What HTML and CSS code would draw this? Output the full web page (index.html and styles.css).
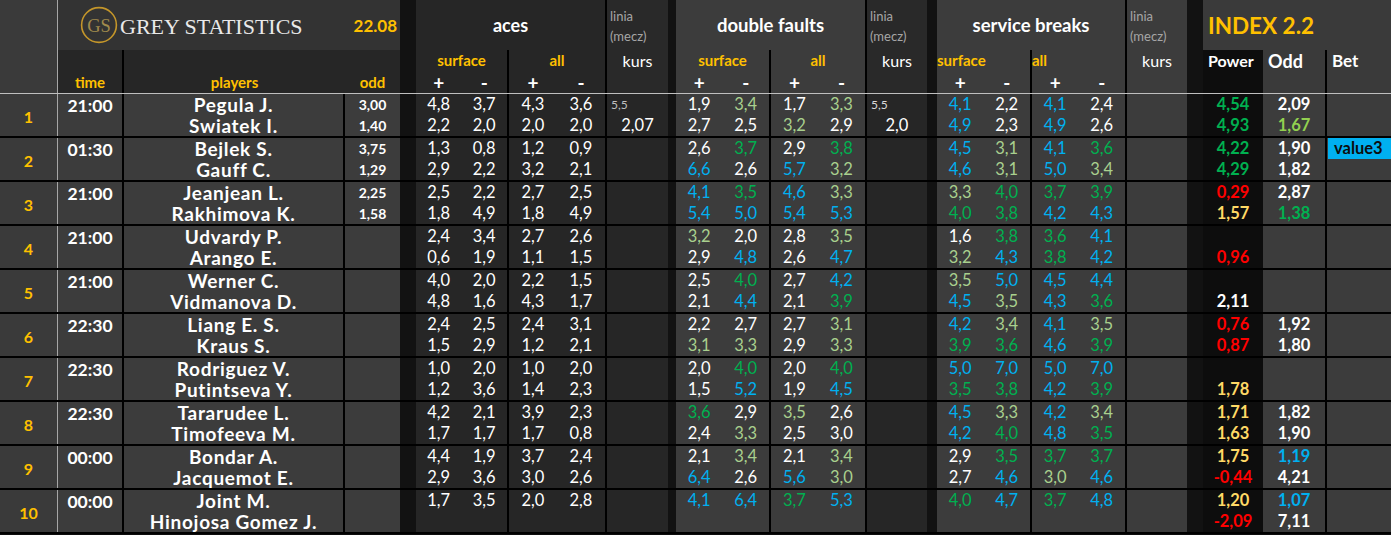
FILE: index.html
```html
<!DOCTYPE html>
<html lang="pl">
<head>
<meta charset="utf-8">
<title>Grey Statistics</title>
<link rel="stylesheet" href="styles.css">
</head>
<body>
<div class="sheet">
  <header class="hdr">
    <div class="h-num"></div>
    <div class="h-title">
      <svg class="logo" width="38" height="38" viewBox="0 0 38 38"><circle cx="19" cy="19" r="17.4" fill="none" stroke="#c4962a" stroke-width="1.6"/><text x="19" y="25.5" text-anchor="middle" font-family="Liberation Serif, serif" font-size="18.5" fill="#a08a4c">GS</text></svg>
      <span class="brand">GREY STATISTICS</span>
      <span class="date">22.08</span>
    </div>
    <div class="h-time"><div class="l2">time</div></div>
    <div class="h-players"><div class="l2">players</div></div>
    <div class="h-odd"><div class="l2">odd</div></div>
    <div class="h-sep s5"></div>
    <div class="h-grp dk a-t">aces</div>
    <div class="h-sub dk br a-s"><div class="hl ye">surface</div><div class="hl pm"><span>+</span><span>-</span></div></div>
    <div class="h-sub dk br a-a"><div class="hl ye">all</div><div class="hl pm"><span>+</span><span>-</span></div></div>
    <div class="h-lin dk2 k1-t"><span>linia</span><span>(mecz)</span></div>
    <div class="h-kurs dk2 k1-k">kurs</div>
    <div class="h-sep s9"></div>
    <div class="h-grp lt d-t">double faults</div>
    <div class="h-sub lt br d-s"><div class="hl ye">surface</div><div class="hl pm"><span>+</span><span>-</span></div></div>
    <div class="h-sub lt br d-a"><div class="hl ye">all</div><div class="hl pm"><span>+</span><span>-</span></div></div>
    <div class="h-lin dk2 k2-t"><span>linia</span><span>(mecz)</span></div>
    <div class="h-kurs dk2 k2-k">kurs</div>
    <div class="h-sep s13"></div>
    <div class="h-grp lt s-t">service breaks</div>
    <div class="h-sub lt br s-s"><div class="hl ye left">surface</div><div class="hl pm"><span>+</span><span>-</span></div></div>
    <div class="h-sub lt br s-a"><div class="hl ye left">all</div><div class="hl pm"><span>+</span><span>-</span></div></div>
    <div class="h-lin lt k3-t"><span>linia</span><span>(mecz)</span></div>
    <div class="h-kurs lt k3-k">kurs</div>
    <div class="h-sep s17"></div>
    <div class="h-index">INDEX 2.2</div>
    <div class="h-power">Power</div>
    <div class="h-oddx">Odd</div>
    <div class="h-bet">Bet</div>
  </header>

  <div class="row">
    <div class="n">1</div>
    <div class="t"><div class="l">21:00</div></div>
    <div class="pl"><div class="l">Pegula J.</div><div class="l">Swiatek I.</div></div>
    <div class="od"><div class="l">3,00</div><div class="l">1,40</div></div>
    <div class="sp"></div>
    <div class="g dk br"><div class="l"><span>4,8</span><span>3,7</span></div><div class="l"><span>2,2</span><span>2,0</span></div></div>
    <div class="g dk br"><div class="l"><span>4,3</span><span>3,6</span></div><div class="l"><span>2,0</span><span>2,0</span></div></div>
    <div class="k dk"><div class="l ln">5,5</div><div class="l">2,07</div></div>
    <div class="sp"></div>
    <div class="g lt br"><div class="l"><span>1,9</span><span class="lg">3,4</span></div><div class="l"><span>2,7</span><span>2,5</span></div></div>
    <div class="g lt br"><div class="l"><span>1,7</span><span class="lg">3,3</span></div><div class="l"><span class="lg">3,2</span><span>2,9</span></div></div>
    <div class="k dk"><div class="l ln ln2">5,5</div><div class="l">2,0</div></div>
    <div class="sp"></div>
    <div class="g lt br"><div class="l"><span class="bl">4,1</span><span>2,2</span></div><div class="l"><span class="bl">4,9</span><span>2,3</span></div></div>
    <div class="g lt br"><div class="l"><span class="bl">4,1</span><span>2,4</span></div><div class="l"><span class="bl">4,9</span><span>2,6</span></div></div>
    <div class="k lt"></div>
    <div class="sp"></div>
    <div class="pw"><div class="l gn">4,54</div><div class="l gn">4,93</div></div>
    <div class="ox"><div class="l">2,09</div><div class="l bg2">1,67</div></div>
    <div class="bet"></div>
  </div>

  <div class="row">
    <div class="n">2</div>
    <div class="t"><div class="l">01:30</div></div>
    <div class="pl"><div class="l">Bejlek S.</div><div class="l">Gauff C.</div></div>
    <div class="od"><div class="l">3,75</div><div class="l">1,29</div></div>
    <div class="sp"></div>
    <div class="g dk br"><div class="l"><span>1,3</span><span>0,8</span></div><div class="l"><span>2,9</span><span>2,2</span></div></div>
    <div class="g dk br"><div class="l"><span>1,2</span><span>0,9</span></div><div class="l"><span>3,2</span><span>2,1</span></div></div>
    <div class="k dk"></div>
    <div class="sp"></div>
    <div class="g lt br"><div class="l"><span>2,6</span><span class="gn">3,7</span></div><div class="l"><span class="bl">6,6</span><span>2,6</span></div></div>
    <div class="g lt br"><div class="l"><span>2,9</span><span class="gn">3,8</span></div><div class="l"><span class="bl">5,7</span><span class="lg">3,2</span></div></div>
    <div class="k dk"></div>
    <div class="sp"></div>
    <div class="g lt br"><div class="l"><span class="bl">4,5</span><span class="lg">3,1</span></div><div class="l"><span class="bl">4,6</span><span class="lg">3,1</span></div></div>
    <div class="g lt br"><div class="l"><span class="bl">4,1</span><span class="gn">3,6</span></div><div class="l"><span class="bl">5,0</span><span class="lg">3,4</span></div></div>
    <div class="k lt"></div>
    <div class="sp"></div>
    <div class="pw"><div class="l gn">4,22</div><div class="l gn">4,29</div></div>
    <div class="ox"><div class="l">1,90</div><div class="l">1,82</div></div>
    <div class="bet"><div class="l tag">value3</div></div>
  </div>

  <div class="row">
    <div class="n">3</div>
    <div class="t"><div class="l">21:00</div></div>
    <div class="pl"><div class="l">Jeanjean L.</div><div class="l">Rakhimova K.</div></div>
    <div class="od"><div class="l">2,25</div><div class="l">1,58</div></div>
    <div class="sp"></div>
    <div class="g dk br"><div class="l"><span>2,5</span><span>2,2</span></div><div class="l"><span>1,8</span><span>4,9</span></div></div>
    <div class="g dk br"><div class="l"><span>2,7</span><span>2,5</span></div><div class="l"><span>1,8</span><span>4,9</span></div></div>
    <div class="k dk"></div>
    <div class="sp"></div>
    <div class="g lt br"><div class="l"><span class="bl">4,1</span><span class="gn">3,5</span></div><div class="l"><span class="bl">5,4</span><span class="bl">5,0</span></div></div>
    <div class="g lt br"><div class="l"><span class="bl">4,6</span><span class="lg">3,3</span></div><div class="l"><span class="bl">5,4</span><span class="bl">5,3</span></div></div>
    <div class="k dk"></div>
    <div class="sp"></div>
    <div class="g lt br"><div class="l"><span class="lg">3,3</span><span class="gn">4,0</span></div><div class="l"><span class="gn">4,0</span><span class="gn">3,8</span></div></div>
    <div class="g lt br"><div class="l"><span class="gn">3,7</span><span class="gn">3,9</span></div><div class="l"><span class="bl">4,2</span><span class="bl">4,3</span></div></div>
    <div class="k lt"></div>
    <div class="sp"></div>
    <div class="pw"><div class="l rd">0,29</div><div class="l yl">1,57</div></div>
    <div class="ox"><div class="l">2,87</div><div class="l gn">1,38</div></div>
    <div class="bet"></div>
  </div>

  <div class="row">
    <div class="n">4</div>
    <div class="t"><div class="l">21:00</div></div>
    <div class="pl"><div class="l">Udvardy P.</div><div class="l">Arango E.</div></div>
    <div class="od"></div>
    <div class="sp"></div>
    <div class="g dk br"><div class="l"><span>2,4</span><span>3,4</span></div><div class="l"><span>0,6</span><span>1,9</span></div></div>
    <div class="g dk br"><div class="l"><span>2,7</span><span>2,6</span></div><div class="l"><span>1,1</span><span>1,5</span></div></div>
    <div class="k dk"></div>
    <div class="sp"></div>
    <div class="g lt br"><div class="l"><span class="lg">3,2</span><span>2,0</span></div><div class="l"><span>2,9</span><span class="bl">4,8</span></div></div>
    <div class="g lt br"><div class="l"><span>2,8</span><span class="lg">3,5</span></div><div class="l"><span>2,6</span><span class="bl">4,7</span></div></div>
    <div class="k dk"></div>
    <div class="sp"></div>
    <div class="g lt br"><div class="l"><span>1,6</span><span class="gn">3,8</span></div><div class="l"><span class="lg">3,2</span><span class="bl">4,3</span></div></div>
    <div class="g lt br"><div class="l"><span class="gn">3,6</span><span class="bl">4,1</span></div><div class="l"><span class="gn">3,8</span><span class="bl">4,2</span></div></div>
    <div class="k lt"></div>
    <div class="sp"></div>
    <div class="pw"><div class="l"></div><div class="l rd">0,96</div></div>
    <div class="ox"></div>
    <div class="bet"></div>
  </div>

  <div class="row">
    <div class="n">5</div>
    <div class="t"><div class="l">21:00</div></div>
    <div class="pl"><div class="l">Werner C.</div><div class="l">Vidmanova D.</div></div>
    <div class="od"></div>
    <div class="sp"></div>
    <div class="g dk br"><div class="l"><span>4,0</span><span>2,0</span></div><div class="l"><span>4,8</span><span>1,6</span></div></div>
    <div class="g dk br"><div class="l"><span>2,2</span><span>1,5</span></div><div class="l"><span>4,3</span><span>1,7</span></div></div>
    <div class="k dk"></div>
    <div class="sp"></div>
    <div class="g lt br"><div class="l"><span>2,5</span><span class="gn">4,0</span></div><div class="l"><span>2,1</span><span class="bl">4,4</span></div></div>
    <div class="g lt br"><div class="l"><span>2,7</span><span class="bl">4,2</span></div><div class="l"><span>2,1</span><span class="gn">3,9</span></div></div>
    <div class="k dk"></div>
    <div class="sp"></div>
    <div class="g lt br"><div class="l"><span class="lg">3,5</span><span class="bl">5,0</span></div><div class="l"><span class="bl">4,5</span><span class="lg">3,5</span></div></div>
    <div class="g lt br"><div class="l"><span class="bl">4,5</span><span class="bl">4,4</span></div><div class="l"><span class="bl">4,3</span><span class="gn">3,6</span></div></div>
    <div class="k lt"></div>
    <div class="sp"></div>
    <div class="pw"><div class="l"></div><div class="l">2,11</div></div>
    <div class="ox"></div>
    <div class="bet"></div>
  </div>

  <div class="row">
    <div class="n">6</div>
    <div class="t"><div class="l">22:30</div></div>
    <div class="pl"><div class="l">Liang E. S.</div><div class="l">Kraus S.</div></div>
    <div class="od"></div>
    <div class="sp"></div>
    <div class="g dk br"><div class="l"><span>2,4</span><span>2,5</span></div><div class="l"><span>1,5</span><span>2,9</span></div></div>
    <div class="g dk br"><div class="l"><span>2,4</span><span>3,1</span></div><div class="l"><span>1,2</span><span>2,1</span></div></div>
    <div class="k dk"></div>
    <div class="sp"></div>
    <div class="g lt br"><div class="l"><span>2,2</span><span>2,7</span></div><div class="l"><span class="lg">3,1</span><span class="lg">3,3</span></div></div>
    <div class="g lt br"><div class="l"><span>2,7</span><span class="lg">3,1</span></div><div class="l"><span>2,9</span><span class="lg">3,3</span></div></div>
    <div class="k dk"></div>
    <div class="sp"></div>
    <div class="g lt br"><div class="l"><span class="bl">4,2</span><span class="lg">3,4</span></div><div class="l"><span class="gn">3,9</span><span class="gn">3,6</span></div></div>
    <div class="g lt br"><div class="l"><span class="bl">4,1</span><span class="lg">3,5</span></div><div class="l"><span class="bl">4,6</span><span class="gn">3,9</span></div></div>
    <div class="k lt"></div>
    <div class="sp"></div>
    <div class="pw"><div class="l rd">0,76</div><div class="l rd">0,87</div></div>
    <div class="ox"><div class="l">1,92</div><div class="l">1,80</div></div>
    <div class="bet"></div>
  </div>

  <div class="row">
    <div class="n">7</div>
    <div class="t"><div class="l">22:30</div></div>
    <div class="pl"><div class="l">Rodriguez V.</div><div class="l">Putintseva Y.</div></div>
    <div class="od"></div>
    <div class="sp"></div>
    <div class="g dk br"><div class="l"><span>1,0</span><span>2,0</span></div><div class="l"><span>1,2</span><span>3,6</span></div></div>
    <div class="g dk br"><div class="l"><span>1,0</span><span>2,0</span></div><div class="l"><span>1,4</span><span>2,3</span></div></div>
    <div class="k dk"></div>
    <div class="sp"></div>
    <div class="g lt br"><div class="l"><span>2,0</span><span class="gn">4,0</span></div><div class="l"><span>1,5</span><span class="bl">5,2</span></div></div>
    <div class="g lt br"><div class="l"><span>2,0</span><span class="gn">4,0</span></div><div class="l"><span>1,9</span><span class="bl">4,5</span></div></div>
    <div class="k dk"></div>
    <div class="sp"></div>
    <div class="g lt br"><div class="l"><span class="bl">5,0</span><span class="bl">7,0</span></div><div class="l"><span class="gn">3,5</span><span class="gn">3,8</span></div></div>
    <div class="g lt br"><div class="l"><span class="bl">5,0</span><span class="bl">7,0</span></div><div class="l"><span class="bl">4,2</span><span class="gn">3,9</span></div></div>
    <div class="k lt"></div>
    <div class="sp"></div>
    <div class="pw"><div class="l"></div><div class="l yl">1,78</div></div>
    <div class="ox"></div>
    <div class="bet"></div>
  </div>

  <div class="row">
    <div class="n">8</div>
    <div class="t"><div class="l">22:30</div></div>
    <div class="pl"><div class="l">Tararudee L.</div><div class="l">Timofeeva M.</div></div>
    <div class="od"></div>
    <div class="sp"></div>
    <div class="g dk br"><div class="l"><span>4,2</span><span>2,1</span></div><div class="l"><span>1,7</span><span>1,7</span></div></div>
    <div class="g dk br"><div class="l"><span>3,9</span><span>2,3</span></div><div class="l"><span>1,7</span><span>0,8</span></div></div>
    <div class="k dk"></div>
    <div class="sp"></div>
    <div class="g lt br"><div class="l"><span class="gn">3,6</span><span>2,9</span></div><div class="l"><span>2,4</span><span class="lg">3,3</span></div></div>
    <div class="g lt br"><div class="l"><span class="lg">3,5</span><span>2,6</span></div><div class="l"><span>2,5</span><span>3,0</span></div></div>
    <div class="k dk"></div>
    <div class="sp"></div>
    <div class="g lt br"><div class="l"><span class="bl">4,5</span><span class="lg">3,3</span></div><div class="l"><span class="bl">4,2</span><span class="gn">4,0</span></div></div>
    <div class="g lt br"><div class="l"><span class="bl">4,2</span><span class="lg">3,4</span></div><div class="l"><span class="bl">4,8</span><span class="gn">3,5</span></div></div>
    <div class="k lt"></div>
    <div class="sp"></div>
    <div class="pw"><div class="l yl">1,71</div><div class="l yl">1,63</div></div>
    <div class="ox"><div class="l">1,82</div><div class="l">1,90</div></div>
    <div class="bet"></div>
  </div>

  <div class="row">
    <div class="n">9</div>
    <div class="t"><div class="l">00:00</div></div>
    <div class="pl"><div class="l">Bondar A.</div><div class="l">Jacquemot E.</div></div>
    <div class="od"></div>
    <div class="sp"></div>
    <div class="g dk br"><div class="l"><span>4,4</span><span>1,9</span></div><div class="l"><span>2,9</span><span>3,6</span></div></div>
    <div class="g dk br"><div class="l"><span>3,7</span><span>2,4</span></div><div class="l"><span>3,0</span><span>2,6</span></div></div>
    <div class="k dk"></div>
    <div class="sp"></div>
    <div class="g lt br"><div class="l"><span>2,1</span><span class="lg">3,4</span></div><div class="l"><span class="bl">6,4</span><span>2,6</span></div></div>
    <div class="g lt br"><div class="l"><span>2,1</span><span class="lg">3,4</span></div><div class="l"><span class="bl">5,6</span><span class="lg">3,0</span></div></div>
    <div class="k dk"></div>
    <div class="sp"></div>
    <div class="g lt br"><div class="l"><span>2,9</span><span class="gn">3,5</span></div><div class="l"><span>2,7</span><span class="bl">4,6</span></div></div>
    <div class="g lt br"><div class="l"><span class="gn">3,7</span><span class="gn">3,7</span></div><div class="l"><span class="lg">3,0</span><span class="bl">4,6</span></div></div>
    <div class="k lt"></div>
    <div class="sp"></div>
    <div class="pw"><div class="l yl">1,75</div><div class="l rd">-0,44</div></div>
    <div class="ox"><div class="l bl">1,19</div><div class="l">4,21</div></div>
    <div class="bet"></div>
  </div>

  <div class="row">
    <div class="n">10</div>
    <div class="t"><div class="l">00:00</div></div>
    <div class="pl"><div class="l">Joint M.</div><div class="l">Hinojosa Gomez J.</div></div>
    <div class="od"></div>
    <div class="sp"></div>
    <div class="g dk br"><div class="l"><span>1,7</span><span>3,5</span></div><div class="l"></div></div>
    <div class="g dk br"><div class="l"><span>2,0</span><span>2,8</span></div><div class="l"></div></div>
    <div class="k dk"></div>
    <div class="sp"></div>
    <div class="g lt br"><div class="l"><span class="bl">4,1</span><span class="bl">6,4</span></div><div class="l"></div></div>
    <div class="g lt br"><div class="l"><span class="gn">3,7</span><span class="bl">5,3</span></div><div class="l"></div></div>
    <div class="k dk"></div>
    <div class="sp"></div>
    <div class="g lt br"><div class="l"><span class="gn">4,0</span><span class="bl">4,7</span></div><div class="l"></div></div>
    <div class="g lt br"><div class="l"><span class="gn">3,7</span><span class="bl">4,8</span></div><div class="l"></div></div>
    <div class="k lt"></div>
    <div class="sp"></div>
    <div class="pw"><div class="l yl">1,20</div><div class="l rd">-2,09</div></div>
    <div class="ox"><div class="l bl">1,07</div><div class="l">7,11</div></div>
    <div class="bet"></div>
  </div>
</div>
</body>
</html>
```

FILE: styles.css
```css
* { box-sizing: border-box; margin: 0; padding: 0; }

body {
  margin: 0;
  background: #0d0d0d;
  color: #ffffff;
  font-family: Lato, "Open Sans", "DejaVu Sans", sans-serif;
  width: 1391px;
  height: 535px;
  overflow: hidden;
}

.sheet { width: 1391px; }

.hdr, .row {
  display: grid;
  grid-template-columns: 58px 66px 221px 55px 16px 93px 98px 61px 8px 95px 96px 60px 10px 95px 95px 60px 16px 60px 64px 64px;
}

/* ---------- header ---------- */
.hdr {
  grid-template-rows: 50px 43px;
  height: 94px;
  border-bottom: 1px solid #bfbfbf;
}

.h-num { grid-column: 1; grid-row: 1 / 3; background: #3a3a3a; border-right: 1px solid #a6a6a6; }

.h-title {
  grid-column: 2 / 5; grid-row: 1;
  background: #333333;
  display: flex; align-items: center;
  padding-left: 22px; padding-right: 3px;
}
.logo { display: block; flex: none; }
.brand {
  margin-left: 2px;
  font-family: "Liberation Serif", "Times New Roman", serif;
  font-size: 22px;
  color: #e9e9e9;
  line-height: 1;
  padding-top: 3px;
}
.date {
  margin-left: auto;
  font-weight: 700;
  font-size: 17px;
  color: #ffc000;
}

.h-time, .h-players, .h-odd {
  grid-row: 2; background: #262626;
  display: flex; flex-direction: column; justify-content: flex-end;
  color: #ffc000; font-weight: 700; font-size: 15px; text-align: center;
}
.h-time { grid-column: 2; border-right: 2px solid #000; }
.h-players { grid-column: 3; }
.h-odd { grid-column: 4; }
.l2 { height: 21px; line-height: 21px; }

.h-sep { grid-row: 1 / 3; background: #121212; }
.s5 { grid-column: 5; }
.s9 { grid-column: 9; }
.s13 { grid-column: 13; }
.s17 { grid-column: 17; }

.h-grp {
  grid-row: 1;
  display: flex; align-items: center; justify-content: center;
  font-weight: 700; font-size: 18px;
  border-right: 2px solid #000;
}
.a-t { grid-column: 6 / 8; }
.d-t { grid-column: 10 / 12; font-size: 18.5px; }
.s-t { grid-column: 14 / 16; font-size: 18.5px; }

.h-sub { grid-row: 2; display: flex; flex-direction: column; }
.a-s { grid-column: 6; }
.a-a { grid-column: 7; }
.d-s { grid-column: 10; }
.d-a { grid-column: 11; }
.s-s { grid-column: 14; }
.s-a { grid-column: 15; }

.hl { height: 21.5px; line-height: 21.5px; text-align: center; font-weight: 700; }
.ye { color: #ffc000; font-size: 15px; }
.left { text-align: left; }
.pm { display: flex; font-size: 19px; }
.pm span { flex: 1; text-align: center; }

.h-lin {
  grid-row: 1;
  display: flex; flex-direction: column; justify-content: center;
  padding-left: 3px; padding-top: 2px;
  color: #a6a6a6; font-size: 13px; line-height: 20px;
}
.h-kurs {
  grid-row: 2;
  font-size: 16px; text-align: center;
  height: 43px; line-height: 22px;
}
.k1-t, .k1-k { grid-column: 8; }
.k2-t, .k2-k { grid-column: 12; }
.k3-t, .k3-k { grid-column: 16; }

.h-index {
  grid-column: 18 / 21; grid-row: 1;
  background: #3a3a3a;
  color: #ffc000; font-weight: 700; font-size: 22.5px;
  display: flex; align-items: center; padding-left: 5px;
}
.h-power, .h-oddx, .h-bet {
  grid-row: 2; font-weight: 700; line-height: 22px; padding-left: 5px;
}
.h-power { grid-column: 18; background: #0d0d0d; font-size: 16px; }
.h-oddx { grid-column: 19; background: #3a3a3a; font-size: 18px; border-right: 2px solid #000; }
.h-bet { grid-column: 20; background: #3a3a3a; font-size: 17px; }

/* ---------- data rows ---------- */
.row { height: 44px; border-bottom: 2px solid #000; }
.row > div { display: flex; flex-direction: column; }

.l { height: 21px; line-height: 21px; display: flex; justify-content: center; white-space: nowrap; }
.l span { flex: 1; text-align: center; }

.dk { background: #262626; }
.dk2 { background: #292929; }
.lt { background: #3c3c3c; }
.br { border-right: 2px solid #000; }

.n {
  background: #3a3a3a; border-right: 1px solid #a6a6a6;
  justify-content: center; align-items: center;
  color: #ffc000; font-weight: 700; font-size: 16px; padding-top: 2px;
}
.t { background: #3c3c3c; border-right: 2px solid #000; font-weight: 700; font-size: 17.5px; padding-top: 1px; }
.pl { background: #3c3c3c; border-right: 2px solid #000; font-weight: 700; font-size: 19px; letter-spacing: 0.7px; }
.od { background: #3c3c3c; font-weight: 700; font-size: 14px; }
.sp { background: #121212; }

.g { font-size: 16.5px; }
.k { font-size: 16.5px; }
.ln { justify-content: flex-start; padding-left: 4px; font-size: 12px; color: #bfbfbf; }
.ln2 { color: #d9d9d9; }

.pw { background: #0d0d0d; font-weight: 700; font-size: 16.5px; }
.ox { background: #3c3c3c; border-right: 2px solid #000; font-weight: 700; font-size: 16.5px; }
.bet { background: #3c3c3c; }
.tag {
  background: #00b0f0; color: #0d0d0d;
  font-weight: 700; font-size: 16.5px;
  justify-content: flex-start; padding-left: 6px; margin-left: 1px;
}

.lg { color: #a9d08e; }
.gn { color: #00b050; }
.bl { color: #00b0f0; }
.rd { color: #ff0000; }
.yl { color: #ffd966; }
.bg2 { color: #92d050; }
```
